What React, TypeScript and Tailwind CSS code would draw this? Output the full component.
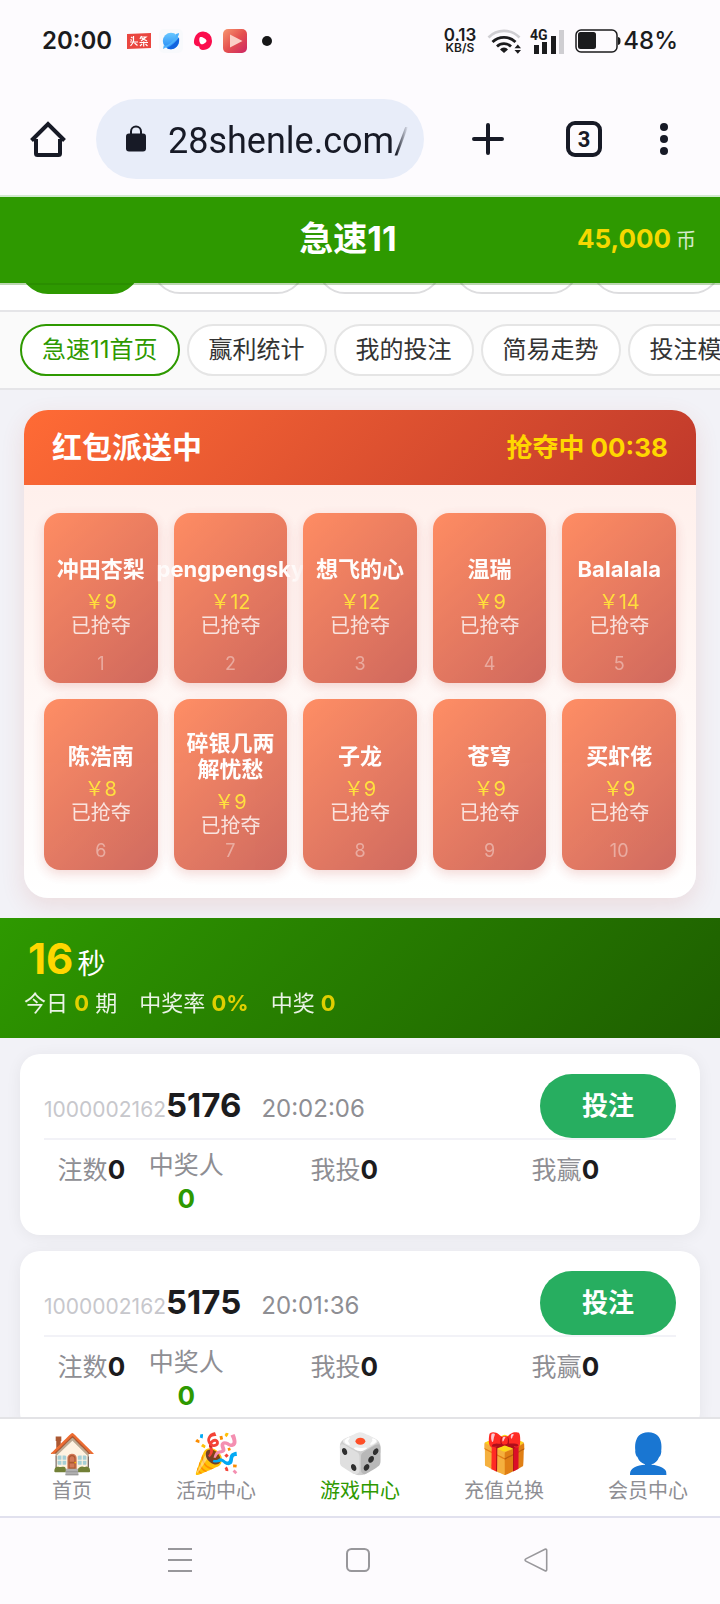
import React, { useState } from 'react';
import clsx from 'clsx';

const gameTabs = [
  { id: 'game-1', width: 'w-[120px]' },
  { id: 'game-2', width: 'w-[153px]' },
  { id: 'game-3', width: 'w-[125px]' },
  { id: 'game-4', width: 'w-[125px]' },
  { id: 'game-5', width: 'w-[130px]' },
];

const pageTabs = ['急速11首页', '赢利统计', '我的投注', '简易走势', '投注模式'];

const packets = [
  { name: '冲田杏梨', amount: 9 },
  { name: 'pengpengsky', amount: 12 },
  { name: '想飞的心', amount: 12 },
  { name: '温瑞', amount: 9 },
  { name: 'Balalala', amount: 14 },
  { name: '陈浩南', amount: 8 },
  { name: '碎银几两解忧愁', amount: 9 },
  { name: '子龙', amount: 9 },
  { name: '苍穹', amount: 9 },
  { name: '买虾佬', amount: 9 },
];

const rounds = [
  { prefix: '1000002162', no: '5176', time: '20:02:06' },
  { prefix: '1000002162', no: '5175', time: '20:01:36' },
];

const navItems = [
  { icon: '🏠', label: '首页' },
  { icon: '🎉', label: '活动中心' },
  { icon: '🎲', label: '游戏中心' },
  { icon: '🎁', label: '充值兑换' },
  { icon: '👤', label: '会员中心' },
];

const StatusBar: React.FC = () => (
  <div className="flex h-[82px] shrink-0 items-center justify-between px-[42px] text-[#1b1b1d]">
    <div className="flex items-center">
      <span className="text-2xl font-semibold">20:00</span>
      {/* Notification icons */}
      <svg className="ml-[15px] h-6 w-6" viewBox="0 0 24 24">
        <path d="M0 5 L24 4 V19 L0 20 Z" fill="#ea4640" />
        <path d="M6.5 7v5.5M4 8l1.500 1M3.500 10.500l1.500 1M3 13h8M6.500 13l-3 4M7.500 14l3 2.500M14.500 7l-1.500 3M14 8h5l-5 4M14.500 9l5.500 3M12.500 13.500h8.500M16.700 12.500v5M15 15l-2 2M18.500 15l2 2" stroke="#fff" strokeWidth="1.200" fill="none" />
      </svg>
      <svg className="ml-2 h-6 w-6" viewBox="0 0 24 24">
        <defs>
          <linearGradient id="planet" x1="0" y1="0" x2="0" y2="1">
            <stop offset="0" stopColor="#69c8ff" />
            <stop offset="1" stopColor="#2187f5" />
          </linearGradient>
        </defs>
        <rect width="24" height="24" rx="5" fill="#f8f9fc" />
        <circle cx="12" cy="12" r="8.200" fill="url(#planet)" />
        <path d="M8 19.300C13 16.500 17.500 12 20 8.500c1 6-2.500 11.500-8 11.700-1.500.1-3-.3-4-.9z" fill="#1263df" />
        <path d="M17 5l3-1c.5 4-8 13-16 16l.8-3.800C8 19 18 9 17 5z" fill="#4fb2fb" />
      </svg>
      <svg className="ml-2 h-6 w-6" viewBox="0 0 24 24">
        <path d="M12 2.500a9 9 0 0 1 9 9.500c0 5-3.500 9-9 9-2.500 0-3.800-1.200-3.800-3.500-3.500-.2-5.700-2-5.200-5.500.6-5.500 4-9.500 9-9.500z" fill="#fb0d4d" />
        <path d="M9 8.200c2-.6 6 1.600 6.500 3.600.2 1.700-3 3.700-5 3.500-2-.2-3-6-1.500-7.100z" fill="#fff" />
      </svg>
      <svg className="ml-2 h-6 w-6" viewBox="0 0 24 24">
        <defs>
          <linearGradient id="video" x1="0" y1="0" x2="1" y2="1">
            <stop offset="0" stopColor="#f7966f" />
            <stop offset="0.500" stopColor="#e5514f" />
            <stop offset="1" stopColor="#cc2565" />
          </linearGradient>
        </defs>
        <rect width="24" height="24" rx="5" fill="url(#video)" />
        <path d="M7 5.500l12.500 6.500L7 18.500z" fill="#fbcfc6" />
      </svg>
      <span className="ml-[15px] h-[10px] w-[10px] rounded-full bg-[#161618]" />
    </div>

    <div className="flex items-center">
      <div className="flex flex-col items-center">
        <span className="text-[17px] leading-[14px] font-semibold">0.13</span>
        <span className="text-xs leading-3 font-semibold">KB/S</span>
      </div>
      <svg className="ml-[11px] h-6 w-[34px] overflow-visible" viewBox="0 0 34 24" fill="none">
        <path d="M1.500 8.500a21.500 21.500 0 0 1 31 0" stroke="#cfced2" strokeWidth="2.600" />
        <path d="M5.500 13a16.500 16.500 0 0 1 23 0" stroke="#1b1b1d" strokeWidth="2.800" />
        <path d="M10 17.500a10 10 0 0 1 14 0" stroke="#1b1b1d" strokeWidth="2.800" />
        <path d="M13 20.500a5 5 0 0 1 8 0l-4 3.500z" fill="#1b1b1d" />
        <path d="M27.500 19.200l3.300-3.700 3.200 3.700zM27.500 21l3.300 3.700L34 21z" fill="#1b1b1d" />
      </svg>
      <svg className="ml-[9px] h-[25px] w-[35px] overflow-visible" viewBox="0 0 35 25">
        <text x="0" y="11" fontFamily="Roboto" fontSize="14" fontWeight="700" fill="#1b1b1d">4G</text>
        <path d="M4 16h5v9H4zM12 13h5v12h-5zM21 7h5v18h-5z" fill="#1b1b1d" />
        <path d="M29 1h5v24h-5z" fill="#cfced2" />
      </svg>
      <svg className="ml-[10px] h-6 w-[46px]" viewBox="0 0 46 24">
        <rect x="1" y="1" width="41" height="22" rx="5" fill="none" stroke="#1b1b1d" strokeWidth="1.500" />
        <rect x="3" y="3" width="18" height="17" rx="2.500" fill="#1b1b1d" />
        <path d="M43 8c2 .5 2.500 1.500 2.500 4S45 15.500 43 16z" fill="#1b1b1d" />
      </svg>
      <span className="ml-0.5 text-2xl font-medium">48%</span>
    </div>
  </div>
);

const BrowserBar: React.FC = () => (
  <div className="flex h-[115px] shrink-0 items-start border-b-2 border-[#d2ead0] pt-[17px] pr-[52px] pl-[30px] text-[#171a26]">
    <div className="flex h-20 min-w-0 flex-1 items-center">
      <button type="button" aria-label="Home" className="shrink-0">
        <svg className="h-9 w-9" viewBox="0 0 36 36" fill="none" stroke="currentColor" strokeWidth="4" strokeLinejoin="round">
          <path d="M6 18v14.500a1.500 1.500 0 0 0 1.500 1.500h21a1.500 1.500 0 0 0 1.500-1.500V18" />
          <path d="M1.500 19.500L18 3l16.500 16.500" strokeLinejoin="miter" />
        </svg>
      </button>
      <div className="ml-[30px] flex h-20 min-w-0 flex-1 items-center rounded-full bg-[#e8edf9] pr-4 pl-[30px]">
        <svg className="h-7 w-5 shrink-0" viewBox="0 0 20 28">
          <path d="M5 9V6.500a5 5 0 0 1 10 0V9" fill="none" stroke="currentColor" strokeWidth="2" />
          <rect y="8.500" width="20" height="18" rx="3" fill="currentColor" />
        </svg>
        <input
          type="text"
          aria-label="Address"
          readOnly
          value="28shenle.com/"
          className="ml-[22px] min-w-0 flex-1 bg-transparent mask-r-from-95% pt-1 font-['Roboto',sans-serif] text-4xl outline-none"
        />
      </div>
      <button type="button" aria-label="New tab" className="ml-12 shrink-0">
        <svg className="h-8 w-8" viewBox="0 0 32 32" stroke="currentColor" strokeWidth="4" strokeLinecap="round">
          <path d="M16 2v28M2 16h28" />
        </svg>
      </button>
      <button
        type="button"
        aria-label="Tabs"
        className="ml-[62px] flex h-9 w-9 shrink-0 items-center justify-center rounded-[9px] border-4 border-current font-['Roboto',sans-serif] text-[22px] font-bold"
      >
        3
      </button>
      <button type="button" aria-label="More" className="ml-[58px] shrink-0">
        <svg className="h-8 w-2" viewBox="0 0 8 32" fill="currentColor">
          <circle cx="4" cy="4" r="4" />
          <circle cx="4" cy="16" r="4" />
          <circle cx="4" cy="28" r="4" />
        </svg>
      </button>
    </div>
  </div>
);

const RedPackets: React.FC = () => (
  <section className="mx-6 mt-5 overflow-hidden rounded-3xl shadow-[0_8px_24px_rgba(192,57,43,0.12)]">
    <div className="flex h-[75px] items-center justify-between bg-linear-135 from-[#ff6b35] to-[#c0392b] px-7">
      <h2 className="text-[30px] font-bold text-white">红包派送中</h2>
      <span className="text-[26px] font-bold text-[#ffd700]">抢夺中 00:38</span>
    </div>
    <div className="grid grid-cols-5 gap-4 bg-linear-to-b from-[#fff0ec] to-white px-5 py-7">
      {packets.map((packet, index) => (
        <button
          type="button"
          key={packet.name}
          className="relative flex aspect-[2/3] min-w-0 flex-col items-center justify-center rounded-2xl bg-linear-135 from-[#ff6b35] to-[#c0392b] px-2 pb-0.5 opacity-75 shadow-[0_4px_12px_rgba(192,57,43,0.25)]"
        >
          <span className="mb-2 text-[22px] leading-[26px] font-bold text-white">{packet.name}</span>
          <span className="text-xl leading-6 text-[#ffd700]">{'\uFFE5'}{packet.amount}</span>
          <span className="text-xl leading-6 text-white/80">已抢夺</span>
          <span className="absolute bottom-[7px] text-lg leading-6 text-white/40">{index + 1}</span>
        </button>
      ))}
    </div>
  </section>
);

const Countdown: React.FC = () => (
  <section className="mt-5 flex h-[120px] shrink-0 flex-col justify-center bg-linear-135 from-[#2e9900] to-[#1e5e00] px-6 text-white">
    <div className="flex items-baseline gap-1 pl-1 leading-[46px]">
      <span className="text-[42px] font-bold text-[#ffd700]">16</span>
      <span className="text-[28px]">秒</span>
    </div>
    <div className="flex gap-[22px] text-[22px] leading-8 opacity-90">
      <span>今日 <b className="text-[#f5d800]">0</b> 期</span>
      <span>中奖率 <b className="text-[#f5d800]">0%</b></span>
      <span>中奖 <b className="text-[#f5d800]">0</b></span>
    </div>
  </section>
);

interface RoundCardProps {
  prefix: string;
  no: string;
  time: string;
}

const RoundCard: React.FC<RoundCardProps> = ({ prefix, no, time }) => (
  <article className="shrink-0 rounded-[20px] bg-white px-6 py-5 shadow-[0_2px_16px_rgba(0,0,0,0.06)]">
    <div className="flex h-[66px] items-start justify-between border-b-2 border-[#f2f2f7]">
      <div className="flex h-16 items-baseline leading-[62px]">
        <span className="text-[21px] text-[#c7c7cc]">{prefix}</span>
        <span className="text-[33px] font-bold text-[#1c1c1e]">{no}</span>
        <span className="ml-5 text-2xl text-[#8e8e93]">{time}</span>
      </div>
      <button type="button" className="h-16 w-[136px] rounded-full bg-[#27ae60] text-[26px] font-bold text-white">
        投注
      </button>
    </div>
    <div className="grid grid-cols-[3fr_3fr_7fr_7fr] pt-[9px] text-center text-[25px] leading-[42px] text-[#8e8e93]">
      <span>注数<b className="text-[26px] text-[#1c1c1e]">0</b></span>
      <span className="flex flex-col leading-[33px]">中奖人<b className="text-[26px] text-[#2e9900]">0</b></span>
      <span>我投<b className="text-[26px] text-[#1c1c1e]">0</b></span>
      <span>我赢<b className="text-[26px] text-[#1c1c1e]">0</b></span>
    </div>
  </article>
);

const SystemNav: React.FC = () => (
  <div className="flex h-[88px] shrink-0 items-center justify-center gap-[154px] border-t-2 border-[#e1e1ee] pr-1 pb-0.5 text-[#98979b]">
    <button type="button" aria-label="Recents">
      <svg className="h-6 w-6" viewBox="0 0 24 24" stroke="currentColor" strokeWidth="2">
        <path d="M0 1h24M0 12h24M0 23h24" />
      </svg>
    </button>
    <button type="button" aria-label="Home screen">
      <svg className="h-6 w-6" viewBox="0 0 24 24" fill="none" stroke="currentColor" strokeWidth="2">
        <rect x="1" y="1" width="22" height="22" rx="4.500" />
      </svg>
    </button>
    <button type="button" aria-label="Back">
      <svg className="h-6 w-6" viewBox="0 0 24 24" fill="none" stroke="currentColor" strokeWidth="1.600">
        <path d="M21 1.200L1.800 10.900a1.200 1.200 0 0 0 0 2.200L21 22.800a1.200 1.200 0 0 0 1.700-1.100V2.300A1.200 1.200 0 0 0 21 1.200z" />
      </svg>
    </button>
  </div>
);

const App: React.FC = () => {
  const [activeTab, setActiveTab] = useState(0);
  const [activeNav, setActiveNav] = useState(2);

  return (
    <div className="flex h-screen flex-col overflow-hidden bg-[#fdfbfe] font-['Inter','Noto_Sans_CJK_SC',sans-serif]">
      <StatusBar />
      <BrowserBar />

      {/* Header */}
      <header className="relative z-10 grid h-[86px] shrink-0 grid-cols-[1fr_auto_1fr] items-center bg-[#2e9900] px-6 pb-1 shadow-[0_2px_0_rgba(34,120,0,0.3)]">
        <h1 className="col-start-2 pr-6 text-[34px] font-bold text-white">急速11</h1>
        <div className="flex items-baseline justify-end gap-[5px]">
          <span className="text-[26px] font-bold text-[#f5d800]">45,000</span>
          <span className="text-xl text-white/80">币</span>
        </div>
      </header>

      {/* Game tabs, scrolled under the header */}
      <nav className="flex h-[29px] shrink-0 items-end gap-3 overflow-hidden border-b-2 border-[#e5e5e8] bg-white pb-4 pl-5">
        {gameTabs.map((tab, index) => (
          <button
            type="button"
            key={tab.id}
            aria-label={tab.id}
            className={clsx(
              'h-14 shrink-0 rounded-full border-2',
              tab.width,
              index === 0 ? 'border-[#2e9900] bg-[#2e9900]' : 'border-[#dddddf] bg-white'
            )}
          />
        ))}
      </nav>

      {/* Page tabs */}
      <nav className="flex h-[78px] shrink-0 items-center gap-[7px] overflow-hidden border-b-2 border-[#e5e5e8] bg-[#fafafa] pl-5">
        {pageTabs.map((label, index) => (
          <button
            type="button"
            key={label}
            onClick={() => setActiveTab(index)}
            className={clsx(
              'h-[52px] shrink-0 rounded-full border-2 bg-white px-5 text-2xl whitespace-nowrap',
              index === activeTab ? 'border-[#2e9900] text-[#2e9900]' : 'border-[#e5e5e5] text-[#333333]'
            )}
          >
            {label}
          </button>
        ))}
      </nav>

      <main className="min-h-0 flex-1 overflow-hidden bg-[#f2f2f7]">
        <RedPackets />
        <Countdown />
        <div className="flex flex-col gap-4 px-5 py-4">
          {rounds.map((round) => (
            <RoundCard key={round.no} {...round} />
          ))}
        </div>
      </main>

      {/* Bottom nav */}
      <nav className="grid h-[99px] shrink-0 grid-cols-5 border-t-2 border-[#e3e3e6] bg-white">
        {navItems.map((item, index) => (
          <button
            type="button"
            key={item.label}
            onClick={() => setActiveNav(index)}
            className={clsx(
              'flex flex-col items-center pt-[10px] text-xl leading-7',
              index === activeNav ? 'text-[#2e9900]' : 'text-[#8e8e93]'
            )}
          >
            <span className="text-[39px] leading-[48px]">{item.icon}</span>
            {item.label}
          </button>
        ))}
      </nav>

      <SystemNav />
    </div>
  );
};

export default App;
